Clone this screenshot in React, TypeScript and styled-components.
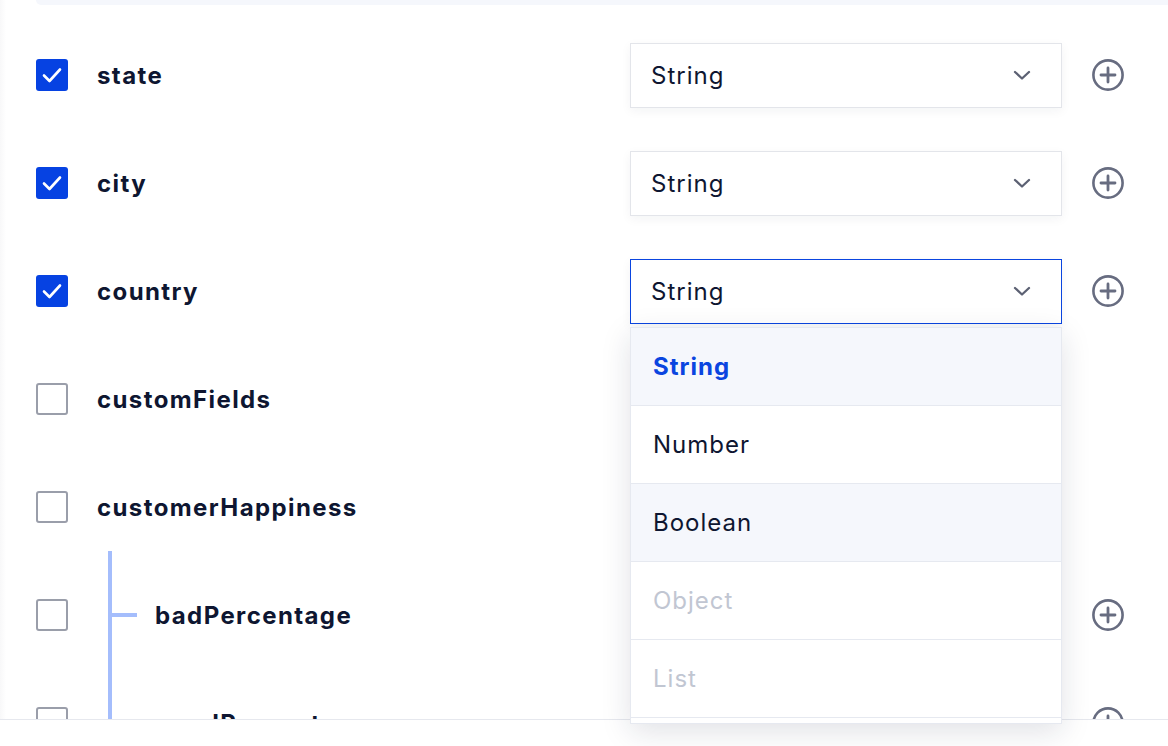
import styled, { createGlobalStyle } from "styled-components";

const GlobalStyle = createGlobalStyle`
  html, body {
    margin: 0;
    padding: 0;
    background: #ffffff;
    font-family: Inter, "Noto Sans", sans-serif;
  }
`;

const Page = styled.div`
  position: relative;
  height: 746px;
  width: 100%;
  display: flex;
  flex-direction: column;
  overflow: hidden;
  background: linear-gradient(to right, #f8f8f9 0, #ffffff 6px);
`;

const TopBar = styled.div`
  height: 5px;
  margin-left: 36px;
  background: #f5f7fc;
  border-bottom-left-radius: 8px;
  flex-shrink: 0;
`;

const Scroll = styled.div`
  flex: 1;
  overflow: hidden;
  padding-top: 16px;
`;

const Footer = styled.div`
  height: 26px;
  flex-shrink: 0;
  border-top: 1px solid #e6e8ee;
  background: #ffffff;
`;

const Row = styled.div`
  display: grid;
  grid-template-columns: 1fr 432px 32px;
  column-gap: 30px;
  align-items: center;
  height: 108px;
  padding: 0 44px 0 36px;
`;

const NameCell = styled.div`
  align-self: stretch;
  display: flex;
  align-items: center;
`;

const Checkbox = styled.div<{ $checked: boolean }>`
  width: 32px;
  height: 32px;
  box-sizing: border-box;
  border-radius: 3px;
  flex-shrink: 0;
  display: flex;
  align-items: center;
  justify-content: center;
  background: ${(p) => (p.$checked ? "#0642e2" : "#ffffff")};
  border: ${(p) => (p.$checked ? "none" : "2px solid #9a9eaa")};
`;

const Branch = styled.div<{ $first: boolean }>`
  align-self: stretch;
  width: 25px;
  margin-left: 40px;
  margin-top: ${(p) => (p.$first ? "-10px" : "0")};
  border-left: 4px solid #a4bdfc;
  display: flex;
  align-items: center;
  padding-top: ${(p) => (p.$first ? "10px" : "0")};
`;

const Tick = styled.div`
  width: 25px;
  height: 4px;
  background: #a4bdfc;
`;

const Name = styled.span<{ $nested: boolean }>`
  margin-left: ${(p) => (p.$nested ? "18px" : "29px")};
  font-size: 24px;
  font-weight: 700;
  letter-spacing: 1.4px;
  color: #0e1631;
  white-space: nowrap;
`;

const SelectWrap = styled.div``;

const SelectBox = styled.div<{ $open: boolean }>`
  height: 65px;
  box-sizing: border-box;
  display: flex;
  align-items: center;
  justify-content: space-between;
  padding: 0 30px 0 20px;
  background: #ffffff;
  border: 1px solid ${(p) => (p.$open ? "#0a45e0" : "#e3e5ea")};
  box-shadow: 0 3px 10px rgba(20, 30, 60, 0.05);
  font-size: 24px;
  color: #0e1631;
  letter-spacing: 1px;
`;

const Menu = styled.div`
  position: absolute;
  z-index: 5;
  width: 432px;
  height: 397px;
  box-sizing: border-box;
  margin-top: 3px;
  background: #ffffff;
  border: 1px solid #e6e9f0;
  box-shadow: 0 8px 28px rgba(20, 30, 60, 0.13);
  overflow: hidden;
`;

const Option = styled.div<{ $selected?: boolean; $hover?: boolean; $disabled?: boolean }>`
  height: 78px;
  box-sizing: border-box;
  display: flex;
  align-items: center;
  padding-left: 22px;
  border-bottom: 1px solid #e6e9f0;
  font-size: 24px;
  letter-spacing: 1px;
  background: ${(p) => (p.$selected || p.$hover ? "#f5f7fc" : "#ffffff")};
  font-weight: ${(p) => (p.$selected ? 700 : 400)};
  color: ${(p) => (p.$selected ? "#0a45e0" : p.$disabled ? "#c1c6d2" : "#0e1631")};
`;

const AddButton = styled.div`
  width: 32px;
  height: 32px;
  display: flex;
`;

const Chevron = () => (
  <svg width="18" height="10" viewBox="0 0 18 10" fill="none">
    <path d="M2 2l7 6.5L16 2" stroke="#5c6173" strokeWidth="2.3" strokeLinecap="round" strokeLinejoin="round" />
  </svg>
);

const Check = () => (
  <svg width="22" height="18" viewBox="0 0 22 18" fill="none">
    <path d="M3 9.5l5.5 5.5L19 3.5" stroke="#ffffff" strokeWidth="2.6" strokeLinecap="round" strokeLinejoin="round" />
  </svg>
);

const PlusCircle = () => (
  <svg width="32" height="32" viewBox="0 0 32 32" fill="none">
    <circle cx="16" cy="16" r="14.6" stroke="#676c80" strokeWidth="2.6" />
    <path d="M9 16h14M16 9v14" stroke="#676c80" strokeWidth="2.8" strokeLinecap="round" />
  </svg>
);

interface Field {
  name: string
  checked: boolean
  nested?: boolean
  first?: boolean
  type?: string
  add?: boolean
  open?: boolean
}

// rows under the open menu have their selects hidden by it, so they are left out
const fields: Field[] = [
  { name: "state", checked: true, type: "String", add: true },
  { name: "city", checked: true, type: "String", add: true },
  { name: "country", checked: true, type: "String", add: true, open: true },
  { name: "customFields", checked: false },
  { name: "customerHappiness", checked: false },
  { name: "badPercentage", checked: false, nested: true, first: true, add: true },
  { name: "goodPercentage", checked: false, nested: true, add: true },
];

const options = [
  { label: "String", selected: true },
  { label: "Number" },
  { label: "Boolean", hover: true },
  { label: "Object", disabled: true },
  { label: "List", disabled: true },
];

const App = () => {
  return (
    <>
      <GlobalStyle />
      <Page>
        <TopBar />
        <Scroll>
          {fields.map((f) => (
            <Row key={f.name}>
              <NameCell>
                <Checkbox $checked={f.checked}>{f.checked && <Check />}</Checkbox>
                {f.nested && (
                  <Branch $first={!!f.first}>
                    <Tick />
                  </Branch>
                )}
                <Name $nested={!!f.nested}>{f.name}</Name>
              </NameCell>
              <SelectWrap>
                {f.type && (
                  <SelectBox $open={!!f.open}>
                    <span>{f.type}</span>
                    <Chevron />
                  </SelectBox>
                )}
                {f.open && (
                  <Menu>
                    {options.map((o) => (
                      <Option key={o.label} $selected={o.selected} $hover={o.hover} $disabled={o.disabled}>
                        {o.label}
                      </Option>
                    ))}
                  </Menu>
                )}
              </SelectWrap>
              <AddButton>{f.add && <PlusCircle />}</AddButton>
            </Row>
          ))}
        </Scroll>
        <Footer />
      </Page>
    </>
  );
};

export default App;
